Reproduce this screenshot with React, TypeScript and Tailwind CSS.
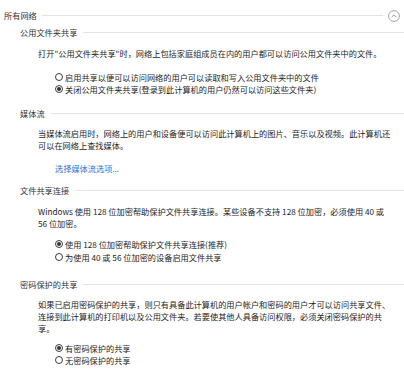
import React from 'react';

const font = { fontFamily: '"Noto Sans CJK SC", "Noto Sans", sans-serif' };

const SectionHeader: React.FC<{ title: string; className?: string }> = ({ title, className }) => (
  <div className={`flex items-center h-[12px] pl-[20px] gap-[6px] text-[#333] ${className ?? ''}`}>
    <span className="whitespace-nowrap">{title}</span>
    <div className="flex-1 h-px bg-[#e3e3e3]" />
  </div>
);

const Radio: React.FC<{ label: string; checked?: boolean; tall?: boolean }> = ({ label, checked, tall }) => (
  <div className={`flex items-center pl-[55px] gap-[2px] ${tall ? 'h-[13px]' : 'h-[12px]'}`}>
    <span className="w-[8px] h-[8px] rounded-full border border-[#3c3c3c] flex items-center justify-center shrink-0">
      {checked && <span className="w-[4px] h-[4px] rounded-full bg-[#333]" />}
    </span>
    <span className="whitespace-nowrap">{label}</span>
  </div>
);

const Para: React.FC<{ lines: string[]; className?: string }> = ({ lines, className }) => (
  <div className={`pl-[38px] leading-[12px] ${className ?? ''}`}>
    {lines.map((l, i) => (
      <div key={i} className="whitespace-nowrap h-[12px]">{l}</div>
    ))}
  </div>
);

const App: React.FC = () => {
  return (
    <div className="w-[404px] h-[370px] bg-white overflow-hidden text-[8.2px] leading-[12px] text-[#1e1e1e]" style={font}>
      <div className="flex items-center h-[12px] mt-[9px] pl-[4px] pr-[4px] gap-[5px] text-[#333]">
        <span className="whitespace-nowrap">所有网络</span>
        <div className="flex-1 h-px bg-[#e3e3e3]" />
        <svg width="12" height="12" viewBox="0 0 12 12" className="shrink-0 mt-[2px]">
          <circle cx="6" cy="6" r="5.4" fill="none" stroke="#9a9a9a" strokeWidth="0.9" />
          <path d="M3.6 7.2 L6 4.8 L8.4 7.2" fill="none" stroke="#8a8a8a" strokeWidth="0.9" />
        </svg>
      </div>

      <SectionHeader title="公用文件夹共享" className="mt-[5px]" />
      <Para className="mt-[9px]" lines={['打开"公用文件夹共享"时，网络上包括家庭组成员在内的用户都可以访问公用文件夹中的文件。']} />
      <div className="mt-[12px]">
        <Radio label="启用共享以便可以访问网络的用户可以读取和写入公用文件夹中的文件" />
        <Radio label="关闭公用文件夹共享(登录到此计算机的用户仍然可以访问这些文件夹)" checked />
      </div>

      <SectionHeader title="媒体流" className="mt-[12px]" />
      <Para
        className="mt-[8px]"
        lines={['当媒体流启用时，网络上的用户和设备便可以访问此计算机上的图片、音乐以及视频。此计算机还', '可以在网络上查找媒体。']}
      />
      <div className="mt-[11px] pl-[55px] h-[12px] text-[#2a74d6] whitespace-nowrap">选择媒体流选项...</div>

      <SectionHeader title="文件共享连接" className="mt-[10px]" />
      <Para
        className="mt-[9px]"
        lines={['Windows 使用 128 位加密帮助保护文件共享连接。某些设备不支持 128 位加密，必须使用 40 或', '56 位加密。']}
      />
      <div className="mt-[8px]">
        <Radio label="使用 128 位加密帮助保护文件共享连接(推荐)" checked tall />
        <Radio label="为使用 40 或 56 位加密的设备启用文件共享" tall />
      </div>

      <SectionHeader title="密码保护的共享" className="mt-[15px]" />
      <Para
        className="mt-[8px]"
        lines={[
          '如果已启用密码保护的共享，则只有具备此计算机的用户帐户和密码的用户才可以访问共享文件、',
          '连接到此计算机的打印机以及公用文件夹。若要使其他人具备访问权限，必须关闭密码保护的共',
          '享。',
        ]}
      />
      <div className="mt-[8px]">
        <Radio label="有密码保护的共享" checked />
        <Radio label="无密码保护的共享" />
      </div>
    </div>
  );
};

export default App;
